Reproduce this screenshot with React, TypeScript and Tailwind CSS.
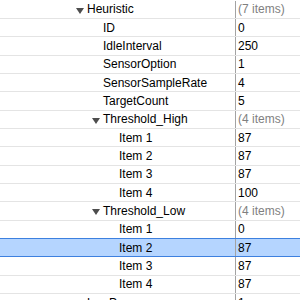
import React from 'react';

type Row = {
  name: string;
  value: string;
  level: number;
  expanded?: boolean;
  selected?: boolean;
};

const rows: Row[] = [
  { name: 'Heuristic', value: '(7 items)', level: 1, expanded: true },
  { name: 'ID', value: '0', level: 2 },
  { name: 'IdleInterval', value: '250', level: 2 },
  { name: 'SensorOption', value: '1', level: 2 },
  { name: 'SensorSampleRate', value: '4', level: 2 },
  { name: 'TargetCount', value: '5', level: 2 },
  { name: 'Threshold_High', value: '(4 items)', level: 2, expanded: true },
  { name: 'Item 1', value: '87', level: 3 },
  { name: 'Item 2', value: '87', level: 3 },
  { name: 'Item 3', value: '87', level: 3 },
  { name: 'Item 4', value: '100', level: 3 },
  { name: 'Threshold_Low', value: '(4 items)', level: 2, expanded: true },
  { name: 'Item 1', value: '0', level: 3 },
  { name: 'Item 2', value: '87', level: 3, selected: true },
  { name: 'Item 3', value: '87', level: 3 },
  { name: 'Item 4', value: '87', level: 3 },
  { name: 'LowPower', value: '1', level: 1 },
];

const Triangle = () => (
  <svg width="8" height="6" viewBox="0 0 8 6" className="mt-[3px]">
    <path d="M0 0 L8 0 L4 6 Z" fill="#4d4d4d" />
  </svg>
);

const PlistRow: React.FC<{ row: Row }> = ({ row }) => {
  const indent = 76 + (row.level - 1) * 16;
  const isGroup = row.value.startsWith('(');
  return (
    <div
      className={
        row.selected
          ? 'flex h-[19.33px] -mt-px items-stretch bg-[#b5d5ff] border-y border-[#3d80df]'
          : 'flex h-[18.33px] items-stretch border-b border-[#e4e4e4]'
      }
    >
      <div className="w-[236px] shrink-0 flex items-center border-r border-[#a3a3a3]" style={{ paddingLeft: indent }}>
        <div className="w-[11px] shrink-0 flex items-center">{row.expanded && <Triangle />}</div>
        <span className="text-black whitespace-nowrap">{row.name}</span>
      </div>
      <div className={isGroup ? 'flex items-center pl-[2px] text-[#7f7f7f]' : 'flex items-center pl-[2px] text-black'}>
        {row.value}
      </div>
    </div>
  );
};

export default function App() {
  return (
    <div className="w-[300px] h-[300px] overflow-hidden bg-white pt-[0.67px] text-[12px] leading-none font-['Liberation_Sans',Arial,sans-serif]">
      {rows.map((row, i) => (
        <PlistRow key={i} row={row} />
      ))}
    </div>
  );
}
